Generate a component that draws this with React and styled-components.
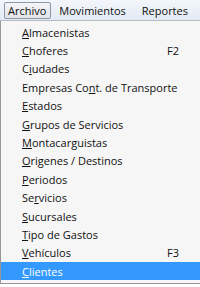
import React from "react";
import styled, { createGlobalStyle } from "styled-components";

const Global = createGlobalStyle`
  html, body { margin: 0; padding: 0; background: #ffffff; }
  body { font-family: "Open Sans", "Noto Sans", sans-serif; }
`;

const Frame = styled.div`
  width: 200px;
  height: 287px;
  overflow: hidden;
  display: flex;
  flex-direction: column;
  background: #ffffff;
`;

const MenuBar = styled.div`
  height: 21px;
  display: flex;
  align-items: flex-end;
  padding: 0 0 1px 4px;
  background: linear-gradient(#f3f6fb, #e3e9f3);
  border-bottom: 1px solid #b6bcc6;
  box-sizing: border-box;
`;

const BarItem = styled.div`
  height: 17px;
  box-sizing: border-box;
  padding: 0 4px 0 3px;
  margin-right: ${(p) => p.$gap}px;
  font-size: 11px;
  line-height: 15px;
  color: #111;
  border: 1px solid ${(p) => (p.$open ? "#8d97a6" : "transparent")};
  border-radius: 2px;
  background: ${(p) => (p.$open ? "linear-gradient(#f4f5f7, #e1e4ea)" : "transparent")};
`;

const Dropdown = styled.div`
  display: flex;
  flex-direction: column;
  padding: 2px 0 0 0;
  background: #f6f6f6;
  border-left: 1px solid #979797;
  border-bottom: 1px solid #979797;
  box-sizing: border-box;
  height: 263px;
  flex: none;
`;

const Item = styled.div`
  height: 18.4px;
  display: flex;
  align-items: center;
  padding: 0 0 0 21px;
  font-size: 11px;
  color: ${(p) => (p.$active ? "#ffffff" : "#111111")};
  background: ${(p) => (p.$active ? "#3399ff" : "transparent")};
`;

const Label = styled.span`
  flex: 1;
  white-space: nowrap;
`;

const Key = styled.span`
  width: 33px;
  white-space: nowrap;
`;

const U = styled.span`
  text-decoration: underline;
  text-underline-offset: 1px;
`;

const items = [
  ["", "A", "lmacenistas", ""],
  ["", "C", "hoferes", "F2"],
  ["C", "i", "udades", ""],
  ["Empresas Co", "n", "t. de Transporte", ""],
  ["", "E", "stados", ""],
  ["", "G", "rupos de Servicios", ""],
  ["", "M", "ontacarguistas", ""],
  ["", "O", "rigenes / Destinos", ""],
  ["", "P", "eriodos", ""],
  ["Se", "r", "vicios", ""],
  ["", "S", "ucursales", ""],
  ["", "T", "ipo de Gastos", ""],
  ["", "V", "ehículos", "F3"],
  ["", "C", "lientes", ""],
];

export default function App() {
  return (
    <Frame>
      <Global />
      <MenuBar>
        <BarItem $open $gap={4}>Archivo</BarItem>
        <BarItem $gap={7}>Movimientos</BarItem>
        <BarItem $gap={0}>Reportes</BarItem>
      </MenuBar>
      <Dropdown>
        {items.map(([pre, u, post, key], i) => (
          <Item key={i} $active={i === items.length - 1}>
            <Label>
              {pre}
              <U>{u}</U>
              {post}
            </Label>
            <Key>{key}</Key>
          </Item>
        ))}
      </Dropdown>
    </Frame>
  );
}
